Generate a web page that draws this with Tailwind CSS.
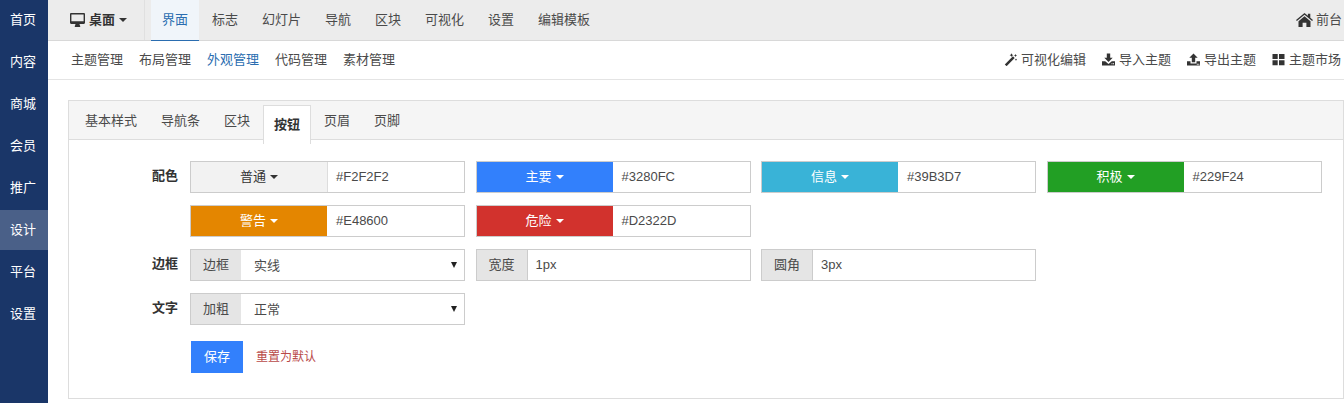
<!DOCTYPE html>
<html lang="zh-CN">
<head>
  <meta charset="UTF-8" />
  <title>外观管理</title>
  <script src="https://cdn.jsdelivr.net/npm/@tailwindcss/browser@4"></script>
</head>
<body class="bg-white text-[#4a4a4a] text-[13px] font-['Liberation_Sans','Noto_Sans_CJK_SC',sans-serif] overflow-hidden">
<div class="flex h-[403px] w-[1344px] overflow-hidden">

  <!-- Sidebar -->
  <nav class="w-12 shrink-0 bg-[#1a3668] text-white flex flex-col gap-[2px]">
    <a class="h-10 flex items-center justify-center pr-[2px] pb-[1px]">首页</a>
    <a class="h-10 flex items-center justify-center pr-[2px] pb-[1px]">内容</a>
    <a class="h-10 flex items-center justify-center pr-[2px] pb-[1px]">商城</a>
    <a class="h-10 flex items-center justify-center pr-[2px] pb-[1px]">会员</a>
    <a class="h-10 flex items-center justify-center pr-[2px] pb-[1px]">推广</a>
    <a class="h-10 flex items-center justify-center pr-[2px] pb-[1px] bg-[#4a6088]">设计</a>
    <a class="h-10 flex items-center justify-center pr-[2px] pb-[1px]">平台</a>
    <a class="h-10 flex items-center justify-center pr-[2px] pb-[1px]">设置</a>
  </nav>

  <div class="flex-1 min-w-0">
    <!-- Top bar -->
    <div class="h-[41px] bg-[#ececec] border-b border-[#d8d8d8] flex items-stretch">
      <div class="w-[97px] border-r border-[#e0e0e0] flex items-center pl-[22px] pb-[1px] gap-1 text-[#333] font-bold">
        <svg class="w-[15px] h-[14px]" viewBox="0 0 15 14"><path fill="#333" fill-rule="evenodd" d="M1.200 0h12.600c.7 0 1.200.5 1.200 1.200v8.600c0 .7-.5 1.200-1.200 1.200H9.500c0 .8.4 1.300.7 2.100v.9H4.800v-.9c.3-.8.7-1.300.7-2.100H1.200C.5 11 0 10.500 0 9.800V1.200C0 .5.500 0 1.200 0zM1.400 1.500v6.800h12.200V1.500z"/></svg>
        <span>桌面</span>
        <span class="w-0 h-0 border-x-4 border-x-transparent border-t-4 border-t-[#333]"></span>
      </div>
      <div class="flex ml-[6px]">
        <a class="w-12 flex items-center justify-center pb-[1px] bg-[#f0f5fa] text-[#2a6db0] border-b border-[#2a6db0] -mb-px">界面</a>
        <a class="pl-[13px] pr-3 flex items-center pb-[1px]">标志</a>
        <a class="px-3 flex items-center pb-[1px]">幻灯片</a>
        <a class="px-3 flex items-center pb-[1px]">导航</a>
        <a class="px-3 flex items-center pb-[1px]">区块</a>
        <a class="px-3 flex items-center pb-[1px]">可视化</a>
        <a class="px-3 flex items-center pb-[1px]">设置</a>
        <a class="px-3 flex items-center pb-[1px]">编辑模板</a>
      </div>
      <a class="ml-auto flex items-center gap-[3px] pr-[2px] pb-[1px]">
        <svg class="w-[17px] h-[14px]" viewBox="0 0 17 14"><path fill="#333" d="M8.500 0 0 7l.9 1.100 7.600-6.300 7.600 6.300L17 7l-2.700-2.300V.8h-2.400v1.900zM2.500 8.300V14h4.100V9.800h3.800V14h4.100V8.300L8.500 3.300z"/></svg>
        <span>前台</span>
      </a>
    </div>

    <!-- Second bar -->
    <div class="h-[39px] border-b border-[#e4e4e4] flex items-center pl-[23px] pr-[3px] pb-[1px]">
      <div class="flex gap-4">
        <a>主题管理</a>
        <a>布局管理</a>
        <a class="text-[#2a6db0]">外观管理</a>
        <a>代码管理</a>
        <a>素材管理</a>
      </div>
      <div class="ml-auto flex gap-4">
        <a class="flex items-center gap-1">
          <svg class="w-[13px] h-[13px]" viewBox="0 0 13 13"><path fill="#333" d="M8.900 3.300 10.700 5.100 2.600 13.200.8 11.400zM7.500.3l.6 1.300 1.300.6-1.300.6-.6 1.300-.6-1.300-1.300-.6 1.300-.6zM11.500 1l.5 1 1 .5-1 .5-.5 1-.5-1-1-.5 1-.5zM12 5.500l.4.800.8.4-.8.400-.4.800-.4-.8-.8-.4.800-.4z"/></svg>
          可视化编辑
        </a>
        <a class="flex items-center gap-1">
          <svg class="w-[13px] h-[13px]" viewBox="0 0 13 13"><path fill="#333" fill-rule="evenodd" d="M4.800 .5h3.400v4.300h2.500L6.500 9 2.300 4.800h2.500zM0 8.200h3.200L6.500 11l3.300-2.800H13V12.500H0zM9.500 10.300v1h1v-1zM11 10.300v1h1v-1z"/></svg>
          导入主题
        </a>
        <a class="flex items-center gap-1">
          <svg class="w-[13px] h-[13px]" viewBox="0 0 13 13"><path fill="#333" fill-rule="evenodd" d="M6.500 .5l4.200 4.200H8.200v4.600H4.800V4.700H2.300zM0 8.200h3.500v2.300h6V8.200H13V12.500H0zM9.800 10.800v1h1v-1zM11.300 10.800v1h1v-1z"/></svg>
          导出主题
        </a>
        <a class="flex items-center gap-1">
          <svg class="w-[13px] h-[13px]" viewBox="0 0 13 13"><path fill="#333" d="M.5 1h5.200v5H.5zM7 1h5.500v5H7zM.5 7.300h5.200v5H.5zM7 7.300h5.500v5H7z"/></svg>
          主题市场
        </a>
      </div>
    </div>

    <!-- Panel -->
    <section class="ml-5 mt-5 h-[299px] w-[1276px] border border-[#ddd]">
      <div class="h-[39px] bg-[#f5f5f5] border-b border-[#ddd] flex pl-[4px]">
        <a class="px-3 flex items-center pt-px">基本样式</a>
        <a class="px-3 flex items-center pt-px">导航条</a>
        <a class="px-3 flex items-center pt-px">区块</a>
        <a class="w-12 h-[39px] mt-[4px] bg-white border-x border-t border-[#ddd] flex items-center justify-center font-bold text-[#333] mx-[1px]">按钮</a>
        <a class="px-3 flex items-center pt-px">页眉</a>
        <a class="px-3 flex items-center pt-px">页脚</a>
      </div>

      <div class="pt-[21px] flex flex-col gap-3">
        <div class="flex">
          <div class="w-[109px] text-right font-bold text-[#333] leading-[32px] -mt-[1px]">配色</div>
          <div class="ml-3 w-[1131.5px] grid grid-cols-4 gap-x-[10.5px] gap-y-3">
            <div class="h-8 flex border border-[#ccc]">
              <div class="w-[137px] bg-[#f2f2f2] text-[#333] border-r border-[#ddd] flex items-center justify-center gap-1">普通<span class="w-0 h-0 border-x-4 border-x-transparent border-t-4 border-t-[#333]"></span></div>
              <div class="flex-1 flex items-center pl-2">#F2F2F2</div>
            </div>
            <div class="h-8 flex border border-[#ccc]">
              <div class="w-[136px] bg-[#3280fc] text-white flex items-center justify-center gap-1">主要<span class="w-0 h-0 border-x-4 border-x-transparent border-t-4 border-t-white"></span></div>
              <div class="flex-1 flex items-center pl-[9px]">#3280FC</div>
            </div>
            <div class="h-8 flex border border-[#ccc]">
              <div class="w-[136px] bg-[#39b3d7] text-white flex items-center justify-center gap-1">信息<span class="w-0 h-0 border-x-4 border-x-transparent border-t-4 border-t-white"></span></div>
              <div class="flex-1 flex items-center pl-[9px]">#39B3D7</div>
            </div>
            <div class="h-8 flex border border-[#ccc]">
              <div class="w-[136px] bg-[#229f24] text-white flex items-center justify-center gap-1">积极<span class="w-0 h-0 border-x-4 border-x-transparent border-t-4 border-t-white"></span></div>
              <div class="flex-1 flex items-center pl-[9px]">#229F24</div>
            </div>
            <div class="h-8 flex border border-[#ccc]">
              <div class="w-[136px] bg-[#e48600] text-white flex items-center justify-center gap-1">警告<span class="w-0 h-0 border-x-4 border-x-transparent border-t-4 border-t-white"></span></div>
              <div class="flex-1 flex items-center pl-[9px]">#E48600</div>
            </div>
            <div class="h-8 flex border border-[#ccc]">
              <div class="w-[136px] bg-[#d2322d] text-white flex items-center justify-center gap-1">危险<span class="w-0 h-0 border-x-4 border-x-transparent border-t-4 border-t-white"></span></div>
              <div class="flex-1 flex items-center pl-[9px]">#D2322D</div>
            </div>
          </div>
        </div>

        <div class="flex">
          <div class="w-[109px] text-right font-bold text-[#333] leading-[32px] -mt-[1px]">边框</div>
          <div class="ml-3 w-[1131.5px] grid grid-cols-4 gap-x-[10.5px]">
            <div class="h-8 flex border border-[#ccc]">
              <div class="w-[50px] bg-[#e5e5e5] flex items-center justify-center">边框</div>
              <div class="flex-1 flex items-center justify-between pl-[13px] pr-[7px]"><span class="pt-[2px]">实线</span><span class="w-0 h-0 border-x-[3.5px] border-x-transparent border-t-[6px] border-t-[#222]"></span></div>
            </div>
            <div class="h-8 flex border border-[#ccc]">
              <div class="w-[51px] bg-[#e5e5e5] border-r border-[#ccc] flex items-center justify-center">宽度</div>
              <div class="flex-1 flex items-center pl-2">1px</div>
            </div>
            <div class="h-8 flex border border-[#ccc]">
              <div class="w-[51px] bg-[#e5e5e5] border-r border-[#ccc] flex items-center justify-center">圆角</div>
              <div class="flex-1 flex items-center pl-2">3px</div>
            </div>
          </div>
        </div>

        <div class="flex">
          <div class="w-[109px] text-right font-bold text-[#333] leading-[32px] -mt-[1px]">文字</div>
          <div class="ml-3 w-[1131.5px] grid grid-cols-4 gap-x-[10.5px]">
            <div class="h-8 flex border border-[#ccc]">
              <div class="w-[50px] bg-[#e5e5e5] flex items-center justify-center">加粗</div>
              <div class="flex-1 flex items-center justify-between pl-[13px] pr-[7px]"><span class="pt-[2px]">正常</span><span class="w-0 h-0 border-x-[3.5px] border-x-transparent border-t-[6px] border-t-[#222]"></span></div>
            </div>
          </div>
        </div>

        <div class="flex items-center ml-[122px] mt-1">
          <button class="w-[52px] h-8 bg-[#3280fc] text-white text-[13px]">保存</button>
          <a class="ml-[13px] text-[12px] text-[#b94a48]">重置为默认</a>
        </div>
      </div>
    </section>
  </div>
</div>
</body>
</html>
